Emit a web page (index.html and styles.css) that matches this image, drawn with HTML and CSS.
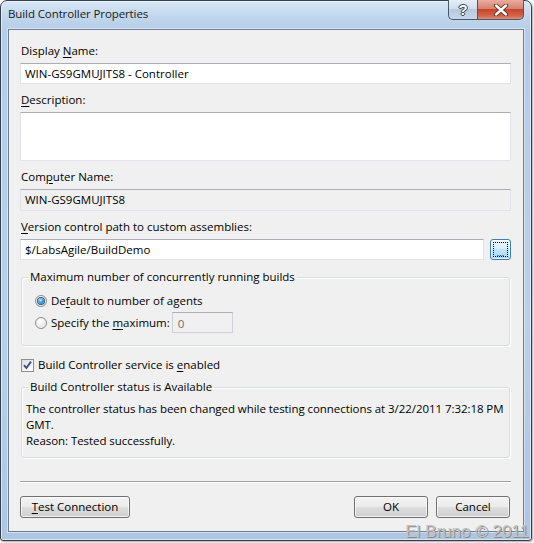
FILE: index.html
```html
<!DOCTYPE html>
<html>
<head>
<meta charset="utf-8">
<link rel="stylesheet" href="styles.css">
</head>
<body>
<div class="window">
  <div class="titlebar">
    <div class="title">Build Controller Properties</div>
    <div class="caption-buttons">
      <div class="cap-btn help">?</div>
      <div class="cap-btn close">
        <svg width="16" height="12" viewBox="0 0 16 12">
          <path d="M3 1.5 L13 10.5 M13 1.5 L3 10.5" stroke="#5a2a20" stroke-width="4.2" stroke-linecap="round"/>
          <path d="M3 1.5 L13 10.5 M13 1.5 L3 10.5" stroke="#ffffff" stroke-width="2.4" stroke-linecap="round"/>
        </svg>
      </div>
    </div>
  </div>
  <div class="client">
    <div class="label first">Display <u>N</u>ame:</div>
    <div class="textbox">WIN-GS9GMUJITS8 - Controller</div>
    <div class="label"><u>D</u>escription:</div>
    <div class="textbox multi"></div>
    <div class="label">Com<u>p</u>uter Name:</div>
    <div class="textbox readonly">WIN-GS9GMUJITS8</div>
    <div class="label"><u>V</u>ersion control path to custom assemblies:</div>
    <div class="path-row">
      <div class="textbox grow">$/LabsAgile/BuildDemo</div>
      <div class="browse"><span class="focus"></span><span class="dots">...</span></div>
    </div>
    <fieldset class="group builds">
      <legend>Maximum number of concurrently running builds</legend>
      <div class="radio-row">
        <span class="radio checked"><span class="dot"></span></span>
        <span>De<u>f</u>ault to number of agents</span>
      </div>
      <div class="radio-row second">
        <span class="radio"></span>
        <span>Specify the <u>m</u>aximum:</span>
        <div class="textbox small disabled">0</div>
      </div>
    </fieldset>
    <div class="check-row">
      <span class="checkbox">
        <svg width="11" height="11" viewBox="0 0 11 11">
          <path d="M2 5.2 L4.4 8 L9 1.6" fill="none" stroke="#3c4e8a" stroke-width="1.9"/>
        </svg>
      </span>
      <span>Build Controller service is <u>e</u>nabled</span>
    </div>
    <fieldset class="group status">
      <legend>Build Controller status is Available</legend>
      <div class="status-text">The controller status has been changed while testing connections at 3/22/2011 7:32:18 PM<br>GMT.<br>Reason: Tested successfully.</div>
    </fieldset>
    <div class="separator"></div>
    <div class="button-row">
      <div class="button test"><u>T</u>est Connection</div>
      <div class="spacer"></div>
      <div class="button">OK</div>
      <div class="button">Cancel</div>
    </div>
  </div>
  <div class="watermark">El Bruno © 2011</div>
</div>
</body>
</html>
```
FILE: styles.css
```css
* { box-sizing: border-box; }
html, body { margin: 0; padding: 0; background: #ffffff; }
body {
  font-family: "Open Sans", "Liberation Sans", sans-serif;
  font-size: 11.5px;
  color: #000;
  width: 534px;
  height: 543px;
  overflow: hidden;
}
u { text-decoration: underline; text-underline-offset: 2px; }

.window {
  position: relative;
  width: 532px;
  height: 541px;
  border: 1px solid #34404d;
  border-radius: 7px 7px 3px 3px;
  background: linear-gradient(to bottom, #d7e6f6 0px, #c3d8ee 14px, #b4cce7 30px, #b9d0ea 60%, #aec6e2 100%);
  box-shadow: 1px 1px 2px rgba(0,0,0,0.35), inset 0 0 0 1px rgba(255,255,255,0.55);
  padding: 0 7px 8px 7px;
  display: flex;
  flex-direction: column;
}

.titlebar {
  height: 28px;
  display: flex;
  justify-content: space-between;
  align-items: flex-start;
}
.title {
  font-size: 11.5px;
  line-height: 16px;
  padding-top: 5px;
  color: #1a1a1a;
  letter-spacing: -0.1px;
}
.caption-buttons {
  display: flex;
  margin-top: -1px;
}
.cap-btn {
  height: 20px;
  border: 1px solid #4a5868;
  border-top: none;
  display: flex;
  align-items: center;
  justify-content: center;
}
.help {
  width: 29px;
  border-radius: 0 0 0 5px;
  border-right: none;
  background: linear-gradient(to bottom, #e6eef7 0%, #d0deec 45%, #b6c9de 50%, #c6d7ea 100%);
  color: #ffffff;
  font-family: "Liberation Sans", sans-serif;
  font-weight: bold;
  font-size: 15px;
  line-height: 18px;
  text-shadow: 0 0 1px #2c3a48, 0 0 1px #2c3a48, 1px 0 0 #3d4b5a, -1px 0 0 #3d4b5a, 0 1px 0 #3d4b5a, 0 -1px 0 #3d4b5a;
}
.close {
  width: 47px;
  border-radius: 0 0 5px 0;
  background: linear-gradient(to bottom, #e9ada1 0%, #d9826f 45%, #c5452c 50%, #d4664c 85%, #e0927c 100%);
}

.client {
  flex: 1;
  border: 1px solid #6e7e90;
  box-shadow: 0 0 0 1px rgba(255,255,255,0.45);
  background: #f0f0f0;
  padding: 0 12px 0 11px;
  display: flex;
  flex-direction: column;
}

.label {
  line-height: 16px;
  height: 16px;
  margin-top: 8px;
  margin-bottom: 4px;
  padding-left: 1px;
  white-space: nowrap;
}
.label.first { margin-top: 13px; }

.textbox {
  height: 21px;
  background: #ffffff;
  border: 1px solid #e2e3ea;
  border-top-color: #abadb3;
  padding: 0 4px;
  line-height: 19px;
  white-space: nowrap;
}
.textbox.multi { height: 49px; }
.textbox.readonly { background: #f0f0f0; height: 22px; line-height: 20px; }
.path-row {
  display: flex;
  gap: 6px;
  align-items: flex-start;
}
.textbox.grow { flex: 1; }
.browse {
  position: relative;
  width: 21px;
  height: 21px;
  border: 1px solid #3c7fb1;
  border-radius: 3px;
  background: linear-gradient(to bottom, #eaf6fd 0%, #d9f0fc 45%, #bee6fd 50%, #a7d9f5 100%);
  box-shadow: inset 0 0 0 1px rgba(255,255,255,0.6);
}
.browse .focus {
  position: absolute;
  left: 2px; top: 2px; right: 2px; bottom: 2px;
  border: 1px dotted #000;
}
.browse .dots {
  position: absolute;
  left: 0; right: 0; bottom: 1px;
  text-align: center;
  font-size: 9px;
  line-height: 9px;
  font-family: "Liberation Sans", sans-serif;
  color: #1a1a1a;
}

.group {
  margin: 0 1px;
  border: 1px solid #d5dfe5;
  border-radius: 3px;
  box-shadow: inset 1px 1px 0 #fff, 1px 1px 0 #fff;
  min-width: 0;
}
.group legend {
  line-height: 16px;
  padding: 0 2px;
  white-space: nowrap;
}
.builds {
  margin-top: 9px;
  padding: 8px 0 12px 13px;
}
.builds legend { margin-left: -7px; }
.radio-row {
  display: flex;
  align-items: center;
  gap: 4px;
  height: 16px;
  line-height: 16px;
}
.radio-row.second {
  margin-top: 3px;
  height: 21px;
}
.radio {
  position: relative;
  width: 12px;
  height: 12px;
  border-radius: 50%;
  border: 1px solid #8b8b8b;
  background: radial-gradient(circle at 40% 35%, #ffffff 0%, #f1f1f1 40%, #cfcfcf 100%);
  box-shadow: inset 0 0 0 1px #f4f4f4;
  flex: none;
}
.radio .dot {
  position: absolute;
  left: 2px; top: 2px;
  width: 6px; height: 6px;
  border-radius: 50%;
  background: radial-gradient(circle at 40% 35%, #b9e5fb 0%, #3d93d2 55%, #1c5c97 100%);
  box-shadow: 0 0 0 1px #2b5f8c;
}
.textbox.small {
  width: 61px;
  margin-left: -2px;
  padding-left: 5px;
}
.textbox.disabled {
  background: #f0f0f0;
  border-color: #cfd1d6;
  border-top-color: #aeb0b5;
  color: #6d6d6d;
  line-height: 21px;
}

.check-row {
  margin-top: 11px;
  display: flex;
  align-items: center;
  gap: 4px;
  height: 16px;
  line-height: 16px;
  padding-left: 1px;
}
.checkbox {
  width: 13px;
  height: 13px;
  border: 1px solid #8e8f8f;
  background: linear-gradient(135deg, #dcdcdc 0%, #f4f4f4 60%, #ffffff 100%);
  display: flex;
  align-items: center;
  justify-content: center;
  flex: none;
}
.checkbox svg { display: block; }

.status {
  margin-top: 6px;
  padding: 6px 0 8px 4px;
}
.status legend { margin-left: 2px; }
.status-text {
  line-height: 16px;
  white-space: nowrap;
  letter-spacing: -0.06px;
}

.separator {
  margin-top: 23px;
  height: 2px;
  border-top: 1px solid #a0a0a0;
  border-bottom: 1px solid #ffffff;
}
.button-row {
  margin-top: 13px;
  display: flex;
  gap: 8px;
  padding-right: 1px;
}
.spacer { flex: 1; }
.button {
  width: 74px;
  height: 22px;
  border: 1px solid #707070;
  border-radius: 3px;
  background: linear-gradient(to bottom, #f2f2f2 0%, #ebebeb 48%, #dddddd 52%, #cfcfcf 100%);
  box-shadow: inset 0 0 0 1px rgba(255,255,255,0.7);
  text-align: center;
  line-height: 20px;
  white-space: nowrap;
}
.button.test { width: 110px; }

.watermark {
  position: absolute;
  right: 2px;
  bottom: -2px;
  font-family: "Liberation Sans", sans-serif;
  font-size: 17px;
  line-height: 20px;
  color: #c2c2c2;
  text-shadow: 1px 1px 0 #8c8c8c;
  white-space: nowrap;
}
```
